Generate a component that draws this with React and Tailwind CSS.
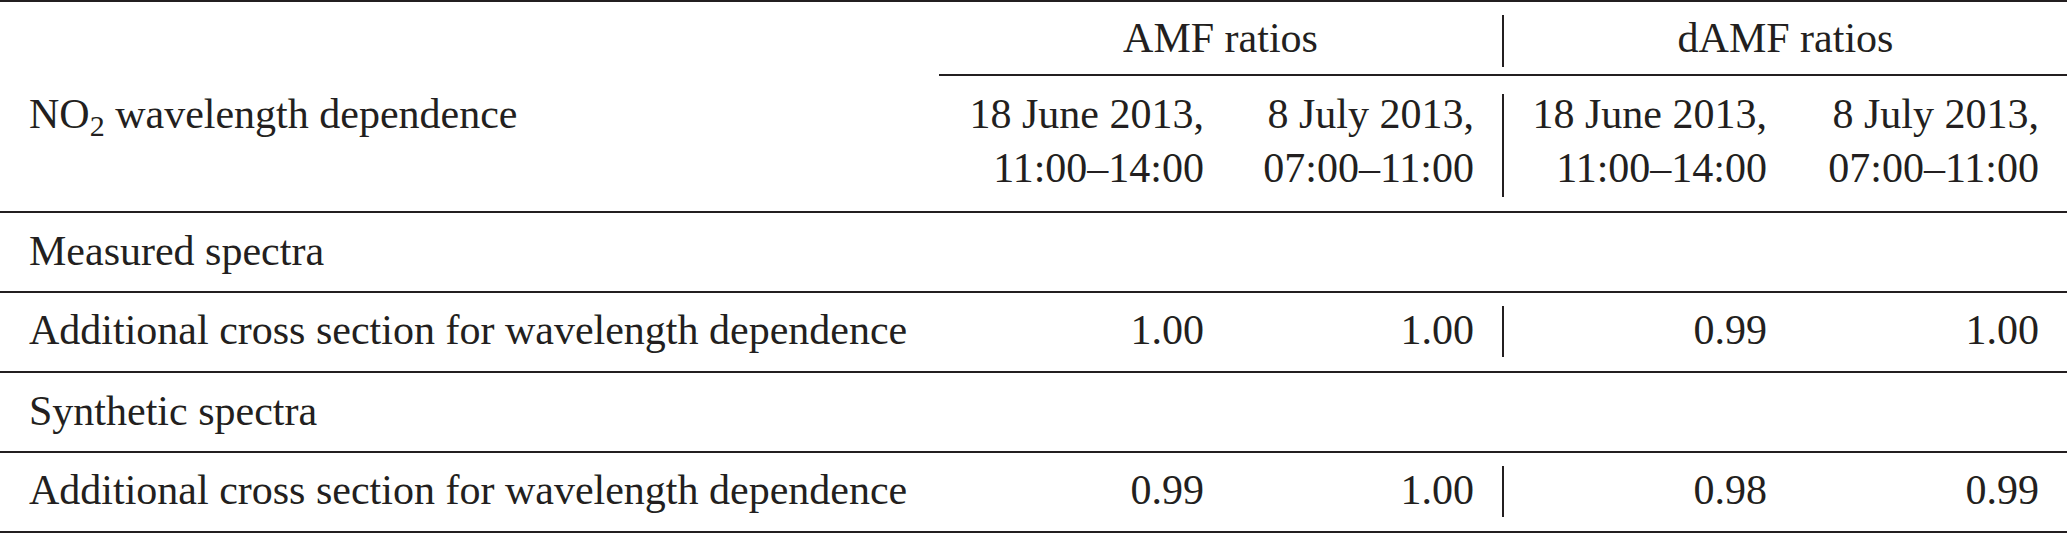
const cols = 'grid grid-cols-[939px_293px_270px_2px_291px_272px]'

const header = [
  ['18 June 2013,', '11:00–14:00'],
  ['8 July 2013,', '07:00–11:00'],
]

const sections = [
  { title: 'Measured spectra', label: 'Additional cross section for wavelength dependence', amf: ['1.00', '1.00'], damf: ['0.99', '1.00'] },
  { title: 'Synthetic spectra', label: 'Additional cross section for wavelength dependence', amf: ['0.99', '1.00'], damf: ['0.98', '0.99'] },
]

function Rule() {
  return <div className="h-[2px] bg-[#231f20]" />
}

function DateCell({ lines }) {
  return (
    <div className="pr-[28px] pt-[11px] pb-[16px] text-right leading-[54px]">
      {lines.map(l => <div key={l}>{l}</div>)}
    </div>
  )
}

function Value({ v }) {
  return <div className="pr-[28px] pt-[13px] pb-[17px] text-right leading-[48px]">{v}</div>
}

export default function App() {
  return (
    <div className="w-[2067px] bg-white font-['Liberation_Serif','Times_New_Roman',serif] text-[42px] text-[#231f20]">
      <Rule />

      {/* group headings */}
      <div className={cols}>
        <div />
        <div className="col-span-2 pt-[9px] pb-[9px] text-center leading-[54px]">AMF ratios</div>
        <div className="mt-[13px] mb-[7px] bg-[#231f20]" />
        <div className="col-span-2 pt-[9px] pb-[9px] text-center leading-[54px]">dAMF ratios</div>
      </div>
      <div className="ml-[939px] h-[2px] bg-[#231f20]" />

      {/* column headings */}
      <div className={cols}>
        <div className="pl-[29px] pt-[11px] leading-[54px]">
          NO<sub className="text-[30px]">2</sub> wavelength dependence
        </div>
        <DateCell lines={header[0]} />
        <DateCell lines={header[1]} />
        <div className="mt-[18px] mb-[14px] bg-[#231f20]" />
        <DateCell lines={header[0]} />
        <DateCell lines={header[1]} />
      </div>
      <Rule />

      {sections.map(s => (
        <div key={s.title}>
          <div className="pl-[29px] pt-[14px] pb-[16px] leading-[48px]">{s.title}</div>
          <Rule />
          <div className={cols}>
            <div className="pl-[29px] pt-[13px] pb-[17px] leading-[48px]">{s.label}</div>
            <Value v={s.amf[0]} />
            <Value v={s.amf[1]} />
            <div className="mt-[13px] mb-[14px] bg-[#231f20]" />
            <Value v={s.damf[0]} />
            <Value v={s.damf[1]} />
          </div>
          <Rule />
        </div>
      ))}
    </div>
  )
}
